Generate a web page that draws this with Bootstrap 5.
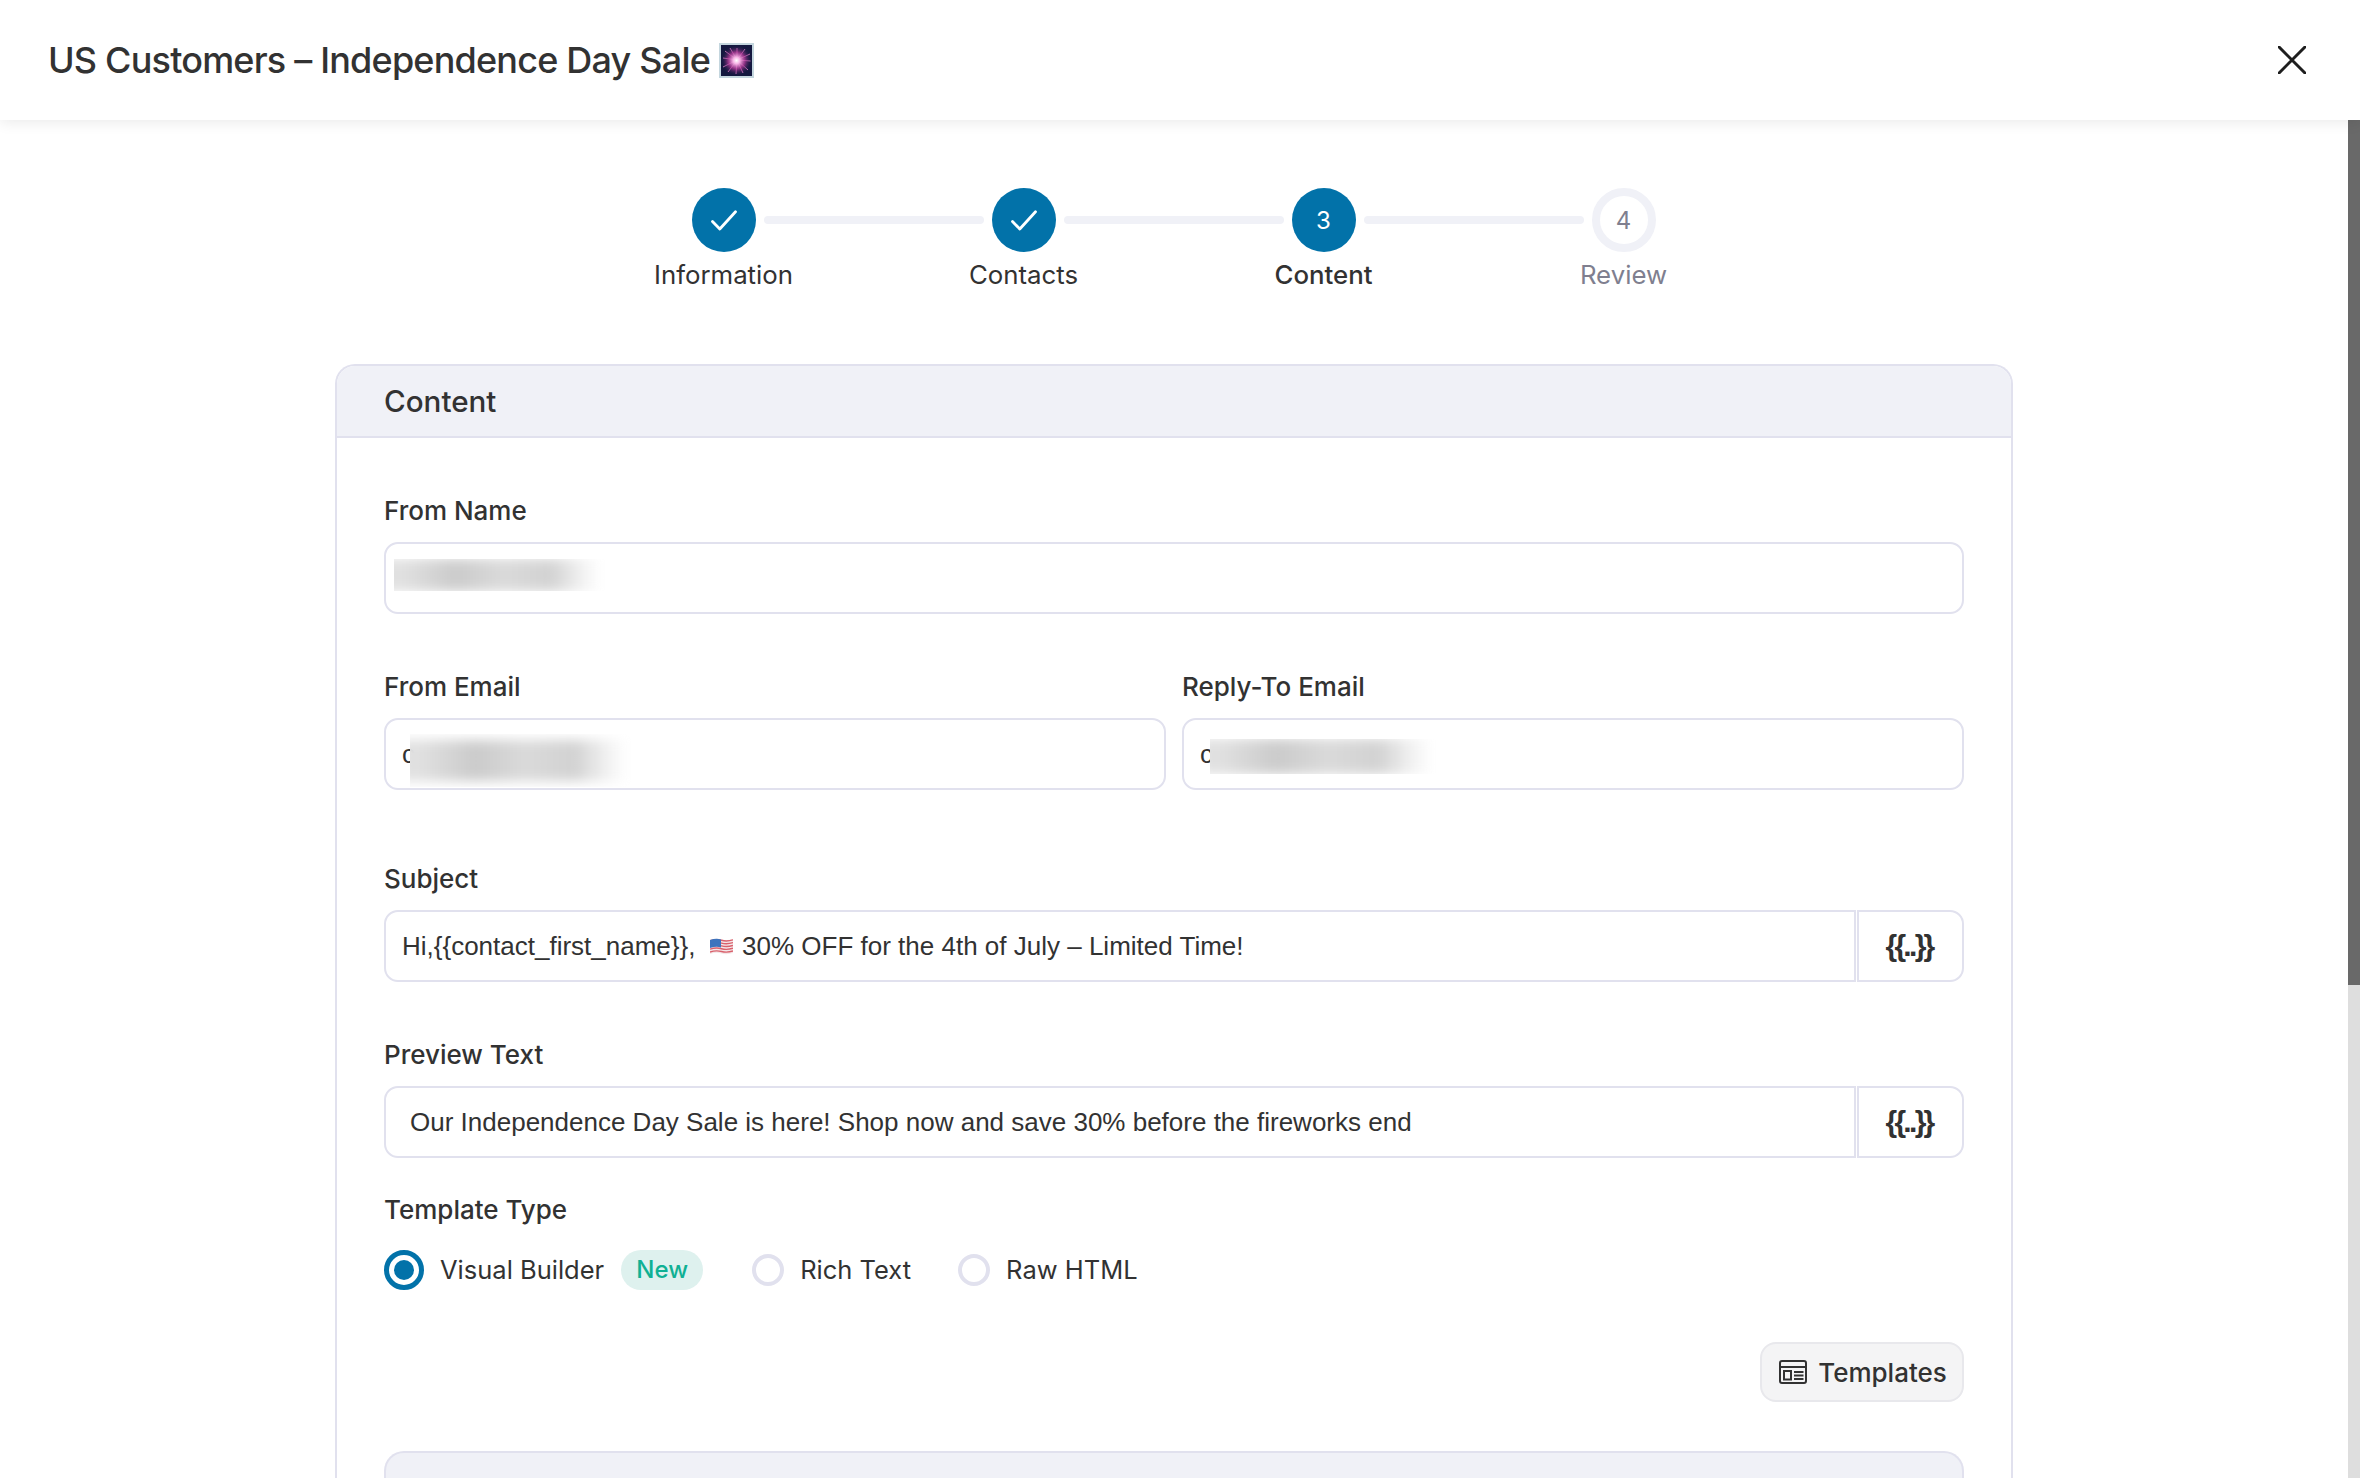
<!DOCTYPE html>
<html lang="en"><head><meta charset="utf-8"><title>Campaign</title>
<link href="https://cdn.jsdelivr.net/npm/bootstrap@5.3.0/dist/css/bootstrap.min.css" rel="stylesheet">
<style>
html,body{height:100%;margin:0}
body{font-family:Inter,"Liberation Sans",sans-serif;color:#323232;background:#fff;overflow:hidden;display:flex;flex-direction:column;height:1478px}
.topbar{height:120px;flex:none;background:#fff;box-shadow:0 2px 14px rgba(0,0,0,.09);position:relative;z-index:2;padding:0 48px}
.topbar-title{font-size:36px;font-weight:500;letter-spacing:-.8px;color:#323232;margin:0;line-height:1}
.fw-emoji{width:35px;height:35px;margin-left:9px;flex:none}
.close-x{width:28px;height:28px;stroke:#1e1e1e;stroke-width:3;stroke-linecap:round;margin-right:6px;margin-left:auto}
.scrollarea{flex:1;min-height:0;display:flex}
.mainpane{flex:1;min-width:0;padding-top:68px}
.scrolltrack{width:12px;flex:none;background:#dedede}
.scrollthumb{height:865px;background:#696969}
.stepper{display:flex;justify-content:center;margin-left:-1px}
.stepitem{width:300px;display:flex;flex-direction:column;align-items:center;position:relative}
.stepdot{width:64px;height:64px;border-radius:50%;background:#0272a9;color:#fff;display:flex;align-items:center;justify-content:center;font-size:24px;position:relative}
.stepdot.todo{background:#fff;border:8px solid #f0f1f7;color:#7f7f8f}
.stepnum{padding-top:2px}
.stepbar{position:absolute;left:190px;top:28px;width:220px;height:8px;border-radius:4px;background:#f0f1f7}
.steplabel{font-size:25.8px;line-height:32px;margin-top:7px;color:#323232}
.steplabel.cur{font-weight:500}
.steplabel.todo{color:#7f7f8f}
.mainpanel{width:1678px;margin:73px 0 0 335px;border:2px solid #e1e1ee;border-bottom:0;border-radius:20px 20px 0 0;flex:1}
.mainpanel-head{height:72px;background:#f0f1f7;border-bottom:2px solid #e1e1ee;border-radius:18px 18px 0 0;padding:0 47px;display:flex;align-items:center;font-size:29.6px;font-weight:500;color:#323232}
.mainpanel-body{padding:0 47px}
.fieldlabel{display:block;font-size:26px;font-weight:500;line-height:32px;color:#323232;margin:0 0 15px}
.fieldbox{height:72px;border:2px solid #e1e1ee;border-radius:14px;background:#fff;display:flex;align-items:center;position:relative;overflow:hidden;font-family:"Liberation Sans",Arial,sans-serif;font-size:26px;color:#323232;padding:0 16px}
.blurpatch{position:absolute;overflow:hidden}
.blurpatch::before{content:"";position:absolute;left:-24px;right:0;top:var(--inset);bottom:var(--inset);filter:blur(6px);background:linear-gradient(90deg,#e2e2e2 0,#e0e0e0 14%,#cbcbcb 36%,#dadada 56%,#d2d2d2 76%,#efefef 88%,#fff 97%)}
.joined{display:flex;align-items:stretch}
.joined .fieldbox{flex:1;border-radius:14px 0 0 14px}
.varbtn{width:107px;margin-left:1px;height:72px;border:2px solid #e1e1ee;border-radius:0 14px 14px 0;display:flex;align-items:center;justify-content:center;background:#fff;font-family:"Liberation Sans",sans-serif;font-weight:700;font-size:30px;letter-spacing:-2.7px;color:#323232;padding:0 3px 2px 0}
.radiorow{display:flex;align-items:center;margin-top:24px;height:40px;font-size:25.5px}
.radiomark{width:32px;height:32px;border-radius:50%;border:4px solid #e1e1ee;background:#fff;flex:none}
.radiomark.on{width:40px;height:40px;border:5px solid #0272a9;display:flex;align-items:center;justify-content:center}
.radiomark.on::after{content:"";width:20px;height:20px;border-radius:50%;background:#0272a9}
.radiotext{margin-left:16px;margin-right:17px}
.newpill{background:#def1ee;color:#10b094;border-radius:20px;height:40px;width:82px;display:flex;align-items:center;justify-content:center;font-weight:500;margin-right:49px;font-size:24px}
.tplbtn{height:60px;width:204px;background:#f4f4f5;border:2px solid #e8e8ec;border-radius:16px;display:flex;align-items:center;justify-content:center;gap:11px;font-size:26px;font-weight:500;color:#323232;padding:0 0 0 2px}
.subpanel{margin-top:49px;height:60px;background:#f0f1f7;border:2px solid #e1e1ee;border-bottom:0;border-radius:20px 20px 0 0}
.mt-fn{margin-top:57px}
.blur-a{left:8px;top:15px;width:214px;height:32px;--inset:0px}
.rowmail{display:flex;gap:16px;margin-top:57px;flex-wrap:nowrap}
.colmail{flex:1;min-width:0;width:auto;padding:0}
.blur-b{left:24px;top:14px;width:224px;height:53px;--inset:6px}
.blur-c{left:26px;top:19px;width:229px;height:35px;--inset:0px}
.mt-subj{margin-top:73px}
.mt-prev{margin-top:57px}
.mt-tt{margin-top:36px}
.flagsvg{width:23px;height:17px;flex:none;margin-right:2px}
.prevbox{padding-left:24px}
.rt2{margin-right:47px}
.tplrow{margin-top:52px}
</style></head><body>
<div class="topbar d-flex align-items-center">
<h1 class="topbar-title">US Customers – Independence Day Sale</h1>
<svg class="fw-emoji" viewBox="0 0 35 35" aria-hidden="true"><defs><radialGradient id="glow" cx=".5" cy=".5" r=".5"><stop offset="0" stop-color="#fff"/><stop offset=".22" stop-color="#f7b4e6"/><stop offset=".55" stop-color="#b83c9c" stop-opacity=".75"/><stop offset="1" stop-color="#1b1746" stop-opacity="0"/></radialGradient></defs><rect width="35" height="35" fill="#c4d6de"/><rect x="2" y="2" width="31" height="31" fill="#14183f"/><g stroke="#d07ac0" stroke-width="1"><path d="M18 17L18 5M18 17L26 6M18 17L31 11M18 17L31.5 18M18 17L29 27M18 17L24 30M18 17L17 31M18 17L9 29M18 17L4 24M18 17L4 15M18 17L6 8M18 17L11 5"/></g><rect x="2" y="2" width="31" height="31" fill="url(#glow)"/></svg>
<svg class="close-x" viewBox="0 0 28 28" aria-label="Close"><path d="M1 1L27 27M27 1L1 27"/></svg>
</div>
<div class="scrollarea">
<div class="mainpane d-flex flex-column">
<div class="stepper">
<div class="stepitem"><div class="stepdot"><svg width="26" height="21" viewBox="0 0 26 21" fill="none" stroke="#fff" stroke-width="2.8" stroke-linecap="round" stroke-linejoin="round"><path d="M1.5 11.5L8.8 19L24.5 1.8"/></svg></div><div class="stepbar"></div><div class="steplabel">Information</div></div>
<div class="stepitem"><div class="stepdot"><svg width="26" height="21" viewBox="0 0 26 21" fill="none" stroke="#fff" stroke-width="2.8" stroke-linecap="round" stroke-linejoin="round"><path d="M1.5 11.5L8.8 19L24.5 1.8"/></svg></div><div class="stepbar"></div><div class="steplabel">Contacts</div></div>
<div class="stepitem"><div class="stepdot"><span class="stepnum">3</span></div><div class="stepbar"></div><div class="steplabel cur">Content</div></div>
<div class="stepitem"><div class="stepdot todo"><span class="stepnum">4</span></div><div class="steplabel todo">Review</div></div>
</div>
<div class="mainpanel">
<div class="mainpanel-head">Content</div>
<div class="mainpanel-body">
<label class="fieldlabel mt-fn">From Name</label>
<div class="fieldbox"><div class="blurpatch blur-a"></div></div>
<div class="row g-0 rowmail">
<div class="colmail"><label class="fieldlabel">From Email</label><div class="fieldbox">c<div class="blurpatch blur-b"></div></div></div>
<div class="colmail"><label class="fieldlabel">Reply-To Email</label><div class="fieldbox">c<div class="blurpatch blur-c"></div></div></div>
</div>
<label class="fieldlabel mt-subj">Subject</label>
<div class="joined"><div class="fieldbox">Hi,{{contact_first_name}},&nbsp;&nbsp;<svg class="flagsvg" viewBox="0 0 23 17" aria-hidden="true"><path d="M0 2Q6 0 11.5 1.5T23 1V15Q17 17 11.5 15.5T0 16Z" fill="#f4e6e8"/><g fill="none" stroke="#d9616c" stroke-width="1.4"><path d="M0 2.8Q6 .8 11.5 2.3T23 1.8"/><path d="M0 5.6Q6 3.6 11.5 5.1T23 4.6"/><path d="M0 8.4Q6 6.4 11.5 7.9T23 7.4"/><path d="M0 11.2Q6 9.2 11.5 10.7T23 10.2"/><path d="M0 14Q6 12 11.5 13.5T23 13"/></g><path d="M0 2Q6 0 11 1.4V9.4Q6 8 0 10Z" fill="#3d74bd"/></svg>&nbsp;30% OFF for the 4th of July – Limited Time!</div><div class="varbtn">{{..}}</div></div>
<label class="fieldlabel mt-prev">Preview Text</label>
<div class="joined"><div class="fieldbox prevbox">Our Independence Day Sale is here! Shop now and save 30% before the fireworks end</div><div class="varbtn">{{..}}</div></div>
<label class="fieldlabel mt-tt">Template Type</label>
<div class="radiorow">
<span class="radiomark on"></span><span class="radiotext">Visual Builder</span><span class="newpill">New</span>
<span class="radiomark"></span><span class="radiotext rt2">Rich Text</span>
<span class="radiomark"></span><span class="radiotext">Raw HTML</span>
</div>
<div class="d-flex justify-content-end tplrow">
<button type="button" class="tplbtn"><svg width="28" height="24" viewBox="0 0 28 24" fill="none" stroke="#323232" stroke-width="2"><rect x="1" y="1" width="26" height="22" rx="2"/><path d="M1 7H27"/><rect x="5" y="11" width="7" height="8.5"/><path d="M15 12H24.5M15 15.5H24.5M15 19H24.5"/></svg>Templates</button>
</div>
<div class="subpanel"></div>
</div>
</div>
</div>
<div class="scrolltrack"><div class="scrollthumb"></div></div>
</div>
</body></html>
